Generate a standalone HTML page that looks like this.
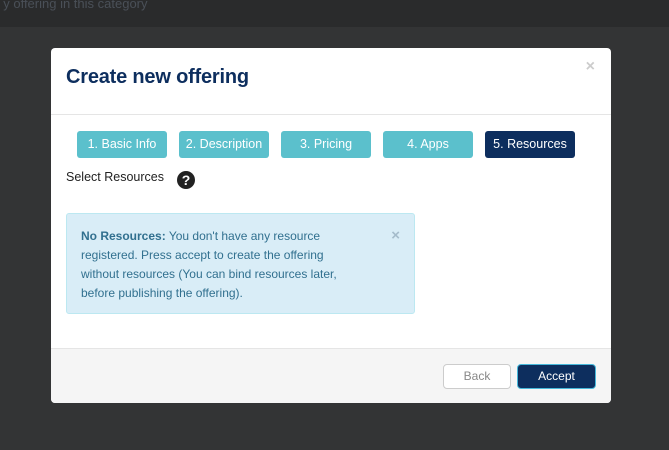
<!DOCTYPE html><html><head><style>
body{margin:0;width:669px;height:450px;background:#333435;position:relative;overflow:hidden;font-family:"Liberation Sans",sans-serif}
.top{position:absolute;left:-4px;top:-3px;width:673px;height:30px;background:#2a2b2c;color:#4a5058;font-size:13px;line-height:14px}
.m{position:absolute;left:51px;top:48px;width:560px;height:355px;background:#fff;border-radius:4px;overflow:hidden}
h1{position:absolute;left:15px;top:18px;margin:0;font-size:20px;color:#0d2e5e;font-weight:bold;letter-spacing:-0.2px}
.x{position:absolute;right:16px;top:10px;color:#ccc;font-size:16px;font-weight:bold}
.hl{position:absolute;left:0;top:66px;width:560px;border-top:1px solid #e5e5e5}
.s{position:absolute;top:83px;width:90px;height:27px;border-radius:3px;background:#5bc0cc;color:#fff;font-size:12.5px;line-height:27px;text-align:center}
.lab{position:absolute;left:15px;top:122px;font-size:12.5px;color:#222}
.q{position:absolute;left:126px;top:123px;width:18px;height:18px;border-radius:50%;background:#222;color:#fff;font-size:14px;font-weight:bold;text-align:center;line-height:18px}
.al{position:absolute;left:15px;top:165px;width:277px;height:86px;background:#d9edf7;border:1px solid #bce8f1;border-radius:3px;color:#31708f;font-size:12px;line-height:19px;padding:13px 56px 0 14px}
.al .c{position:absolute;right:14px;top:12px;color:#a5bccb;font-weight:bold;font-size:15px}
.ft{position:absolute;left:0;top:300px;width:560px;height:55px;background:#f5f5f5;border-top:1px solid #e5e5e5}
.b{position:absolute;top:15px;height:23px;border-radius:4px;font-size:12px;line-height:23px;text-align:center}
</style></head><body>
<div class="top">&nbsp;&nbsp;y offering in this category</div>
<div class="m">
<h1>Create new offering</h1><div class="x">×</div>
<div class="hl"></div>
<div class="s" style="left:26px">1. Basic Info</div>
<div class="s" style="left:128px">2. Description</div>
<div class="s" style="left:230px">3. Pricing</div>
<div class="s" style="left:332px">4. Apps</div>
<div class="s" style="left:434px;background:#0d2e5e">5. Resources</div>
<div class="lab">Select Resources</div><div class="q">?</div>
<div class="al"><b>No Resources:</b> You don't have any resource registered. Press accept to create the offering without resources (You can bind resources later, before publishing the offering).<span class="c">×</span></div>
<div class="ft">
<div class="b" style="left:392px;width:66px;background:#fff;border:1px solid #ccc;color:#888">Back</div>
<div class="b" style="left:466px;width:77px;background:#0d2e5e;border:1px solid #46b8da;color:#fff">Accept</div>
</div>
</div>
</body></html>
